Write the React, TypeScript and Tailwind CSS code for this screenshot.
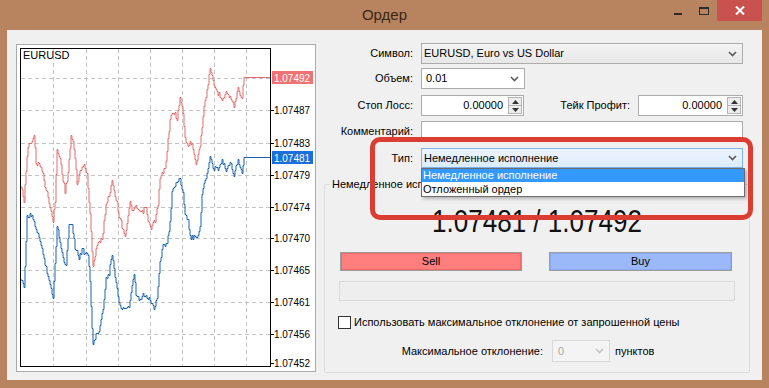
import React from 'react';

// anchor points of the ask (red) and bid (blue) lines, in page pixels
const askAnchors = [
  [21, 187], [24, 200], [26, 170], [28, 145], [32, 142], [34, 135], [36, 162], [41, 165], [45, 185], [50, 205],
  [53, 222], [55, 200], [57, 150], [60, 158], [65, 192], [68, 172], [71, 135], [74, 148], [77, 182], [80, 172],
  [84, 163], [87, 175], [90, 215], [93, 265], [97, 243], [102, 240], [106, 203], [109, 195], [112, 180], [116, 198],
  [119, 215], [121, 222], [125, 235], [130, 203], [133, 210], [136, 207], [141, 213], [146, 207], [148, 222], [151, 227],
  [155, 220], [158, 205], [160, 178], [165, 168], [168, 140], [170, 118], [174, 112], [177, 118], [180, 98], [183, 112],
  [185, 138], [188, 145], [192, 142], [196, 163], [200, 145], [203, 115], [207, 88], [210, 70], [214, 85], [218, 93],
  [222, 98], [226, 92], [230, 97], [234, 105], [238, 88], [242, 97], [244, 78],
];

const bidAnchors = [
  [21, 280], [24, 287], [27, 217], [31, 215], [33, 220], [38, 233], [42, 250], [46, 267], [50, 283], [53, 300],
  [57, 225], [60, 240], [63, 258], [66, 265], [69, 223], [72, 223], [75, 247], [79, 257], [82, 250], [85, 252],
  [88, 253], [90, 280], [92, 330], [93, 343], [97, 333], [100, 327], [103, 307], [106, 277], [109, 273], [112, 253],
  [115, 277], [118, 297], [121, 308], [129, 308], [132, 287], [134, 273], [136, 295], [140, 300], [143, 295], [147, 297],
  [150, 300], [154, 308], [157, 297], [160, 260], [163, 245], [167, 243], [170, 223], [172, 190], [176, 183], [180, 179],
  [183, 190], [185, 215], [188, 220], [190, 237], [197, 237], [200, 225], [202, 195], [205, 180], [208, 168], [210, 158],
  [214, 168], [218, 168], [222, 160], [226, 170], [230, 160], [234, 175], [238, 160], [242, 172], [244, 157],
];

const noise = (x: number, seed: number) => {
  const v = Math.sin(x * 12.9898 + seed * 78.233) * 43758.5453;
  return (v - Math.floor(v)) * 5 - 2.5;
};

const tickPath = (anchors: number[][], seed: number, endY: number) => {
  const at = (x: number) => {
    for (let i = 0; i < anchors.length - 1; i++) {
      const [x0, y0] = anchors[i];
      const [x1, y1] = anchors[i + 1];
      if (x >= x0 && x <= x1) return y0 + ((y1 - y0) * (x - x0)) / (x1 - x0 || 1);
    }
    return anchors[anchors.length - 1][1];
  };
  let d = `M21 ${at(21).toFixed(1)}`;
  for (let x = 22; x <= 243; x++) {
    const y = Math.round(at(x) + noise(x, seed)) + 0.5;
    d += ` H${x} V${y}`;
  }
  d += ` H244 V${endY + 0.5} H270`;
  return d;
};

const axisLabels: [string, number][] = [
  ['1.07487', 110], ['1.07483', 143], ['1.07479', 175], ['1.07474', 207], ['1.07470', 238],
  ['1.07465', 270], ['1.07461', 302], ['1.07456', 334], ['1.07452', 363],
];
const gridY = [78, 110, 143, 175, 207, 238, 270, 302, 334];
const gridX = [53, 86, 118, 150, 182, 214, 246];
const axisFont = 'Liberation Sans, Arial, sans-serif';

const PriceChart = () => (
  <svg width="300" height="328" viewBox="16 44 300 328" className="block">
    <rect x="16.5" y="44.5" width="299" height="327" fill="#fff" stroke="#a9a9a9" />
    {gridY.map(y => (
      <line key={y} x1="21" x2="270" y1={y + 0.5} y2={y + 0.5} stroke="#c4c4c4" strokeDasharray="4 3" />
    ))}
    {gridX.map(x => (
      <line key={x} x1={x + 0.5} x2={x + 0.5} y1="49" y2="366" stroke="#c4c4c4" strokeDasharray="4 3" />
    ))}
    <path d={tickPath(askAnchors, 1, 77)} fill="none" stroke="#e06b6b" strokeWidth="1" />
    <path d={tickPath(bidAnchors, 2, 157)} fill="none" stroke="#1b63ad" strokeWidth="1" />
    <rect x="20.5" y="48.5" width="250" height="318" fill="none" stroke="#000" />
    {axisLabels.map(([t, y]) => (
      <g key={t}>
        <line x1="271" x2="274" y1={y + 0.5} y2={y + 0.5} stroke="#000" />
        <text x="274" y={y + 4} fontSize="11" fontFamily={axisFont} fill="#000" textLength="36" lengthAdjust="spacingAndGlyphs">{t}</text>
      </g>
    ))}
    <rect x="272" y="71" width="41" height="13" fill="#f07272" />
    <text x="274" y="81.5" fontSize="11" fontFamily={axisFont} fill="#fff" textLength="36" lengthAdjust="spacingAndGlyphs">1.07492</text>
    <rect x="272" y="151" width="41" height="13" fill="#1a6fdc" />
    <text x="274" y="161.5" fontSize="11" fontFamily={axisFont} fill="#fff" textLength="36" lengthAdjust="spacingAndGlyphs">1.07481</text>
    <text x="23" y="59" fontSize="11" fontFamily={axisFont} fill="#000">EURUSD</text>
  </svg>
);

const Chevron = ({ color = '#5a5a5a' }: { color?: string }) => (
  <svg width="9" height="6" viewBox="0 0 9 6" className="shrink-0">
    <path d="M1 1 L4.5 4.5 L8 1" fill="none" stroke={color} strokeWidth="1.6" />
  </svg>
);

const Spinner = () => (
  <div className="w-[14px] h-[17px] mr-[1px] border border-[#b5b5b5] bg-[#ececec] flex flex-col shrink-0">
    <div className="flex-1 flex items-center justify-center border-b border-[#b5b5b5]">
      <svg width="7" height="4"><path d="M0 4 L3.5 0 L7 4Z" fill="#333" /></svg>
    </div>
    <div className="flex-1 flex items-center justify-center">
      <svg width="7" height="4"><path d="M0 0 L3.5 4 L7 0Z" fill="#333" /></svg>
    </div>
  </div>
);

const Label = ({ children }: { children: React.ReactNode }) => (
  <span className="w-[89px] shrink-0 text-right">{children}</span>
);

const TitleBar = () => (
  <div className="h-[30px] grid grid-cols-[1fr_auto_1fr]">
    <div />
    <div className="text-[15px] leading-[30px] text-[#3b2616]">Ордер</div>
    <div className="flex justify-end items-start pr-[7px]">
      <div className="w-[25px] h-[21px] flex items-end justify-center pb-[6px]">
        <div className="w-[8px] h-[2px] bg-[#2b2b2b]" />
      </div>
      <div className="w-[27px] h-[21px] flex items-center justify-center">
        <div className="w-[10px] h-[8px] border border-[#2b2b2b] border-t-2" />
      </div>
      <div className="w-[45px] h-[21px] bg-[#c9514e] flex items-center justify-center">
        <svg width="10" height="9" viewBox="0 0 10 9">
          <path d="M1 0.5 L9 8.5 M9 0.5 L1 8.5" stroke="#fff" strokeWidth="2" />
        </svg>
      </div>
    </div>
  </div>
);

const OrderForm = () => (
  <div className="relative ml-[8px] w-[426px] flex flex-col">
    <div className="flex items-center h-[21px]">
      <Label>Символ:</Label>
      <div className="ml-[8px] w-[322px] h-full flex items-center justify-between pl-[2px] pr-[5px] border border-[#acacac] bg-linear-to-b from-[#f4f4f4] to-[#e7e7e7]">
        <span>EURUSD, Euro vs US Dollar</span>
        <Chevron />
      </div>
    </div>

    <div className="flex items-center h-[21px] mt-[4px]">
      <Label>Объем:</Label>
      <div className="ml-[8px] w-[104px] h-full flex items-center justify-between pl-[4px] pr-[5px] border border-[#acacac] bg-white">
        <span>0.01</span>
        <Chevron />
      </div>
    </div>

    <div className="flex items-center h-[21px] mt-[6px]">
      <Label>Стоп Лосс:</Label>
      <div className="ml-[8px] w-[103px] h-full flex items-center border border-[#acacac] bg-white">
        <span className="flex-1 text-right pr-[5px]">0.00000</span>
        <Spinner />
      </div>
      <span className="w-[106px] text-right">Тейк Профит:</span>
      <div className="ml-[8px] w-[105px] h-full flex items-center border border-[#acacac] bg-white">
        <span className="flex-1 text-right pr-[5px]">0.00000</span>
        <Spinner />
      </div>
    </div>

    <div className="flex items-center h-[21px] mt-[5px]">
      <Label>Комментарий:</Label>
      <div className="ml-[8px] w-[322px] h-full border border-[#acacac] bg-white" />
    </div>

    <div className="relative flex items-center h-[20px] mt-[6px]">
      <Label>Тип:</Label>
      <div className="ml-[8px] w-[322px] h-full flex items-center justify-between pl-[2px] pr-[5px] border border-[#7eb4ea] bg-linear-to-b from-[#ecf4fc] to-[#dcecfc]">
        <span>Немедленное исполнение</span>
        <Chevron />
      </div>
      <div className="absolute left-[97px] top-[20px] w-[324px] z-10 bg-white border border-[#6d6d6d] shadow-[2px_2px_3px_rgba(0,0,0,0.25)]">
        <div className="h-[13px] leading-[13px] pl-[1px] bg-[#3399ff] text-white">Немедленное исполнение</div>
        <div className="h-[14px] leading-[14px] pl-[1px]">Отложенный ордер</div>
      </div>
    </div>

    <div className="relative mt-[16px] h-[189px] border border-[#dcdcdc] rounded-[2px] flex flex-col">
      <span className="absolute -top-[8px] left-[5px] px-[2px] leading-[14px] bg-[#f0f0f0]">Немедленное исполнение</span>

      <div className="mt-[17px] h-[38px] flex items-center justify-center">
        <span className="text-[31px] leading-none scale-x-[0.84] text-[#111]">1.07481 / 1.07492</span>
      </div>

      <div className="mt-[12px] h-[19px] px-[15px] flex gap-[27px]">
        <button className="w-[182px] h-full border border-[#9c9c9c] bg-[#ff7f7f] shadow-[inset_0_0_0_1px_#f06868]">Sell</button>
        <button className="w-[183px] h-full border border-[#9c9c9c] bg-[#9bb8f8] shadow-[inset_0_0_0_1px_#8eaaf0]">Buy</button>
      </div>

      <div className="mt-[10px] mx-[14px] h-[20px] border border-[#dadada] bg-[#eeeeee]" />

      <div className="mt-[15px] h-[13px] pl-[13px] flex items-center">
        <div className="w-[13px] h-[13px] border border-[#333] bg-white shrink-0" />
        <span className="ml-[3px]">Использовать максимальное отклонение от запрошенной цены</span>
      </div>

      <div className="mt-[11px] h-[22px] pl-[75px] flex items-center">
        <span className="w-[143px] text-right">Максимальное отклонение:</span>
        <div className="ml-[9px] w-[58px] h-full flex items-center justify-between pl-[5px] pr-[5px] border border-[#d9d9d9] bg-[#f4f4f4] text-[#a8a8a8]">
          <span>0</span>
          <Chevron color="#c2c2c2" />
        </div>
        <span className="ml-[5px]">пунктов</span>
      </div>
    </div>

    <div className="absolute left-[46px] top-[94px] w-[383px] h-[83px] border-[5px] border-[#dc3d33] rounded-[10px] z-20 pointer-events-none" />
  </div>
);

export default function App() {
  return (
    <div className="w-[769px] h-[388px] overflow-hidden bg-[#b8845f] font-['Liberation_Sans',Arial,sans-serif] text-[11px] text-black flex flex-col">
      <TitleBar />
      <div className="mx-[7px] h-[350px] bg-[#f0f0f0] flex pl-[9px] pt-[13px]">
        <div className="mt-[1px]">
          <PriceChart />
        </div>
        <OrderForm />
      </div>
    </div>
  );
}
